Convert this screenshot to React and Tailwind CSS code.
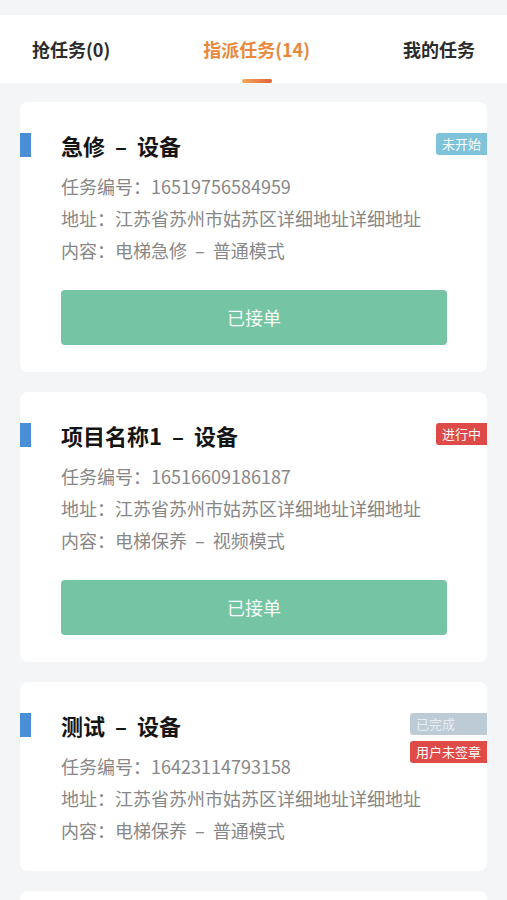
import React from "react";

const tabs = [
  { label: "抢任务(0)", active: false },
  { label: "指派任务(14)", active: true },
  { label: "我的任务", active: false },
];

const tasks = [
  {
    title: "急修 – 设备",
    no: "16519756584959",
    address: "江苏省苏州市姑苏区详细地址详细地址",
    content: "电梯急修 – 普通模式",
    badges: [{ text: "未开始", cls: "bg-[#7ec3d9] text-white" }],
    button: true,
  },
  {
    title: "项目名称1 – 设备",
    no: "16516609186187",
    address: "江苏省苏州市姑苏区详细地址详细地址",
    content: "电梯保养 – 视频模式",
    badges: [{ text: "进行中", cls: "bg-[#dd4a47] text-white" }],
    button: true,
  },
  {
    title: "测试 – 设备",
    no: "16423114793158",
    address: "江苏省苏州市姑苏区详细地址详细地址",
    content: "电梯保养 – 普通模式",
    badges: [
      { text: "已完成", cls: "bg-[#bccbd6] text-[#e6edf2]" },
      { text: "用户未签章", cls: "bg-[#e04b47] text-white" },
    ],
    button: false,
  },
];

const TaskCard = ({ task }) => (
  <div className={`relative bg-white rounded-lg pt-[31px] ${task.button ? "pb-[27px]" : "pb-[25px]"}`}>
    <div className="flex items-center h-[24px]">
      <div className="w-[11px] h-[24px] bg-[#4a8fd6]" />
      <h3 className="ml-[30px] text-[22px] leading-[24px] font-bold text-[#151515] whitespace-pre">
        {task.title.replace(" – ", "  –  ")}
      </h3>
    </div>
    <div className="absolute right-0 top-[31px] flex flex-col gap-[6px]">
      {task.badges.map((b) => (
        <span key={b.text} className={`h-[22px] leading-[22px] px-[6px] text-[13px] rounded-l-[3px] ${b.cls}`}>
          {b.text}
        </span>
      ))}
    </div>
    <div className="mt-[13px] pl-[41px] text-[18px] leading-[32px] text-[#878787] whitespace-pre">
      <p>任务编号：{task.no}</p>
      <p>地址：{task.address}</p>
      <p>内容：{task.content.replace(" – ", "  –  ")}</p>
    </div>
    {task.button && (
      <div className="pl-[41px] pr-[40px] mt-[24px]">
        <button className="w-full h-[55px] rounded-[4px] bg-[#75c5a4] text-[#f4fbf8] text-[18px]">已接单</button>
      </div>
    )}
  </div>
);

export default function App() {
  return (
    <div className="min-h-[900px] bg-[#f4f5f7] pt-[15px] font-['Noto_Sans_CJK_SC',sans-serif] overflow-hidden">
      <div className="bg-white flex justify-between px-[32px] pt-[22px]">
        {tabs.map((t) => (
          <div key={t.label} className="flex flex-col items-center">
            <span
              className={`text-[18px] leading-[24px] font-semibold ${t.active ? "text-[#e9883d]" : "text-[#2b2b2b]"}`}
            >
              {t.label}
            </span>
            {t.active && (
              <div className="mt-[18px] w-[30px] h-[4px] rounded-full bg-gradient-to-r from-[#f4a65c] to-[#e3603a]" />
            )}
          </div>
        ))}
      </div>
      <div className="px-[20px] pt-[19px] flex flex-col gap-[20px]">
        {tasks.map((t) => (
          <TaskCard key={t.no} task={t} />
        ))}
        <div className="bg-white rounded-lg h-[60px]" />
      </div>
    </div>
  );
}
